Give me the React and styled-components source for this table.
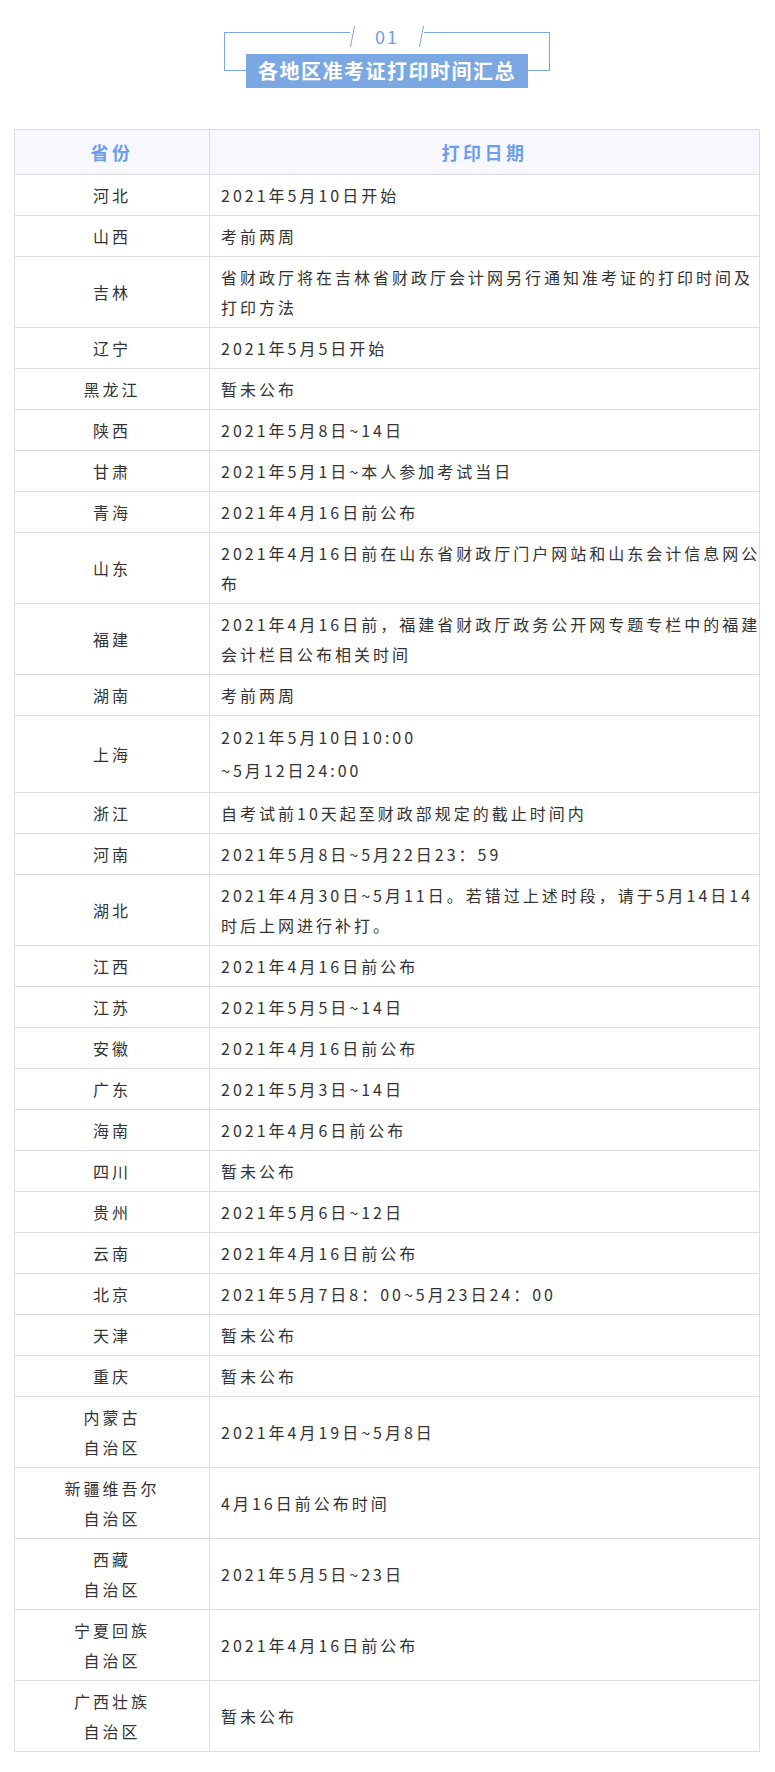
import React from 'react';
import styled, { createGlobalStyle } from 'styled-components';

const GlobalStyle = createGlobalStyle`
  html, body {
    margin: 0;
    padding: 0;
    background: #ffffff;
  }
  body {
    font-family: "Noto Sans CJK SC", "Noto Sans", sans-serif;
    color: #333333;
  }
`;

const Page = styled.div`
  padding: 32px 15px 20px 14px;
`;

const TitleFrame = styled.div`
  position: relative;
  width: 326px;
  box-sizing: border-box;
  margin: 0 auto;
  border: 1px solid #7ba8e2;
  padding: 21px 21px 0;
`;

const Badge = styled.div`
  position: absolute;
  top: -7px;
  left: 50%;
  transform: translateX(-50%);
  display: flex;
  align-items: center;
  height: 21px;
  padding: 0 2px;
  background: #ffffff;
`;

const Slash = styled.span`
  display: block;
  width: 1px;
  height: 21px;
  background: #7ba8e2;
  transform: skewX(-11deg);
`;

const Number = styled.span`
  width: 68px;
  text-align: center;
  font-size: 18px;
  line-height: 21px;
  letter-spacing: 2px;
  color: #6f9de3;
`;

const TitleBar = styled.div`
  height: 34px;
  margin-bottom: -18px;
  background: #7ba8e2;
  color: #ffffff;
  font-size: 20px;
  font-weight: 700;
  letter-spacing: 1.5px;
  line-height: 34px;
  text-align: center;
`;

const Table = styled.table`
  width: 100%;
  margin-top: 58px;
  border-collapse: collapse;
  table-layout: fixed;
  border: 1px solid #dddddd;
`;

const HeadCell = styled.th`
  width: ${p => p.$width || 'auto'};
  padding: 7px 0;
  line-height: 30px;
  background: #f7f8fd;
  border: 1px solid #dddddd;
  color: #6c9df0;
  font-size: 18px;
  font-weight: 700;
  letter-spacing: 3.5px;
  text-align: center;
`;

const Cell = styled.td`
  padding: 5px 11px;
  border: 1px solid #dddddd;
  font-size: 16px;
  line-height: ${p => (p.$loose ? '33px' : '30px')};
  letter-spacing: 3px;
  text-align: ${p => (p.$center ? 'center' : 'left')};
  vertical-align: middle;
  white-space: nowrap;
`;

const rows = [
  [['河北'], ['2021年5月10日开始']],
  [['山西'], ['考前两周']],
  [['吉林'], ['省财政厅将在吉林省财政厅会计网另行通知准考证的打印时间及', '打印方法']],
  [['辽宁'], ['2021年5月5日开始']],
  [['黑龙江'], ['暂未公布']],
  [['陕西'], ['2021年5月8日~14日']],
  [['甘肃'], ['2021年5月1日~本人参加考试当日']],
  [['青海'], ['2021年4月16日前公布']],
  [['山东'], ['2021年4月16日前在山东省财政厅门户网站和山东会计信息网公', '布']],
  [['福建'], ['2021年4月16日前，福建省财政厅政务公开网专题专栏中的福建', '会计栏目公布相关时间']],
  [['湖南'], ['考前两周']],
  [['上海'], ['2021年5月10日10:00', '~5月12日24:00'], true],
  [['浙江'], ['自考试前10天起至财政部规定的截止时间内']],
  [['河南'], ['2021年5月8日~5月22日23：59']],
  [['湖北'], ['2021年4月30日~5月11日。若错过上述时段，请于5月14日14', '时后上网进行补打。']],
  [['江西'], ['2021年4月16日前公布']],
  [['江苏'], ['2021年5月5日~14日']],
  [['安徽'], ['2021年4月16日前公布']],
  [['广东'], ['2021年5月3日~14日']],
  [['海南'], ['2021年4月6日前公布']],
  [['四川'], ['暂未公布']],
  [['贵州'], ['2021年5月6日~12日']],
  [['云南'], ['2021年4月16日前公布']],
  [['北京'], ['2021年5月7日8：00~5月23日24：00']],
  [['天津'], ['暂未公布']],
  [['重庆'], ['暂未公布']],
  [['内蒙古', '自治区'], ['2021年4月19日~5月8日']],
  [['新疆维吾尔', '自治区'], ['4月16日前公布时间']],
  [['西藏', '自治区'], ['2021年5月5日~23日']],
  [['宁夏回族', '自治区'], ['2021年4月16日前公布']],
  [['广西壮族', '自治区'], ['暂未公布']],
];

function Lines({ items }) {
  return items.map((text, i) => (
    <React.Fragment key={i}>
      {i > 0 && <br />}
      {text}
    </React.Fragment>
  ));
}

export default function App() {
  return (
    <>
      <GlobalStyle />
      <Page>
        <TitleFrame>
          <Badge>
            <Slash />
            <Number>01</Number>
            <Slash />
          </Badge>
          <TitleBar>各地区准考证打印时间汇总</TitleBar>
        </TitleFrame>

        <Table>
          <thead>
            <tr>
              <HeadCell $width="194px">省份</HeadCell>
              <HeadCell>打印日期</HeadCell>
            </tr>
          </thead>
          <tbody>
            {rows.map(([province, dates, loose]) => (
              <tr key={province.join('')}>
                <Cell $center $loose={loose}>
                  <Lines items={province} />
                </Cell>
                <Cell $loose={loose}>
                  <Lines items={dates} />
                </Cell>
              </tr>
            ))}
          </tbody>
        </Table>
      </Page>
    </>
  );
}
